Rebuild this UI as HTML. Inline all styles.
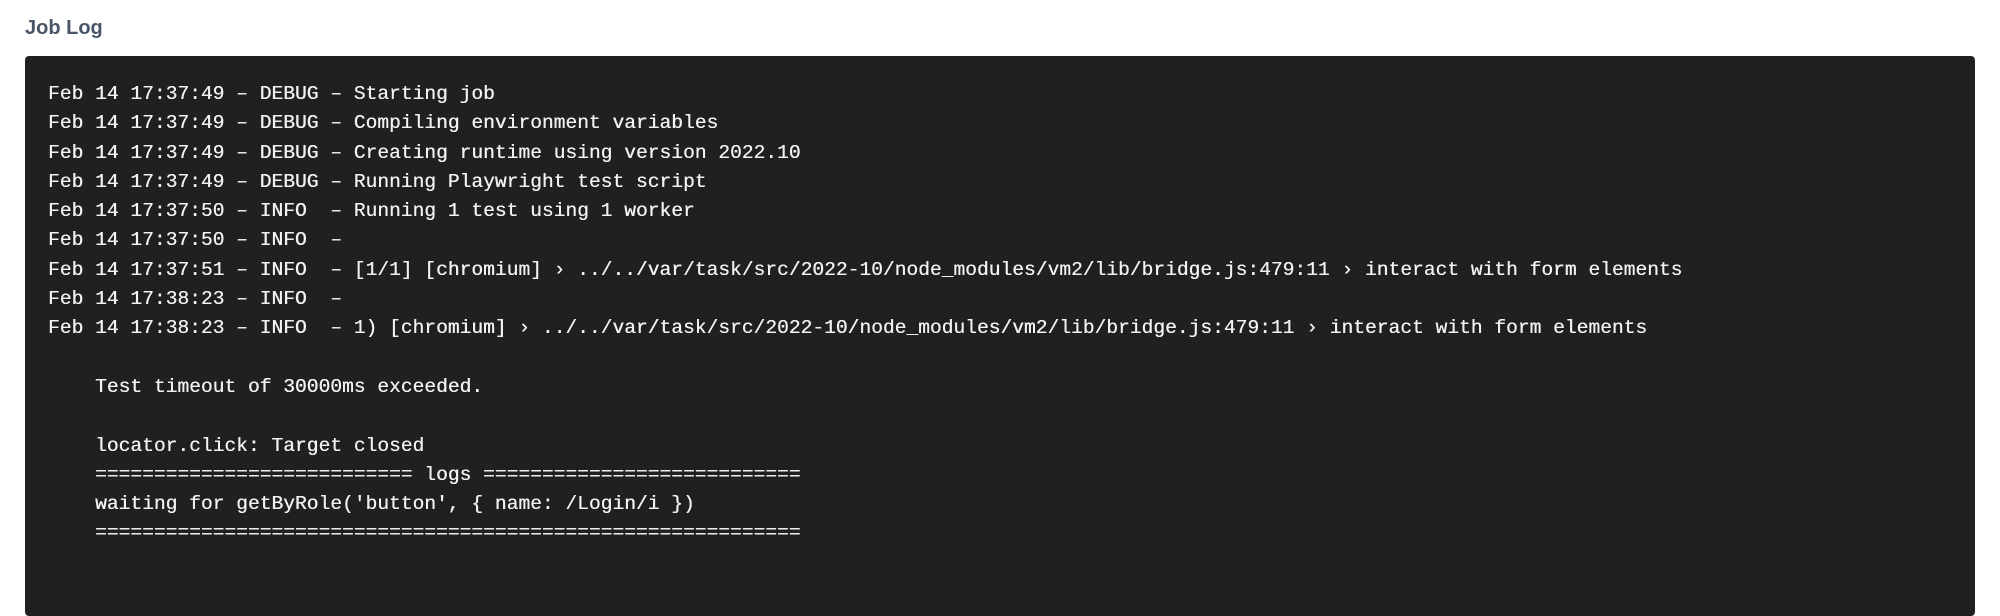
<!DOCTYPE html>
<html><head><meta charset="utf-8"><style>
html,body{margin:0;padding:0;background:#fff;width:2000px;height:565px;overflow:hidden}
.t{position:absolute;left:25px;top:17px;font-family:"Liberation Sans",sans-serif;font-size:20px;font-weight:600;color:#4a5568}
.box{position:absolute;left:25px;top:56px;width:1950px;height:560px;background:#202020;border-radius:4px}
pre{position:absolute;left:48px;top:80px;margin:0;font-family:"Liberation Mono",monospace;font-size:19.6px;line-height:29.3px;color:#f2f2f2;text-shadow:0.3px 0 0 #f2f2f2}
</style></head><body>
<div class="t">Job Log</div>
<div class="box"></div>
<pre>Feb 14 17:37:49 – DEBUG – Starting job
Feb 14 17:37:49 – DEBUG – Compiling environment variables
Feb 14 17:37:49 – DEBUG – Creating runtime using version 2022.10
Feb 14 17:37:49 – DEBUG – Running Playwright test script
Feb 14 17:37:50 – INFO  – Running 1 test using 1 worker
Feb 14 17:37:50 – INFO  –
Feb 14 17:37:51 – INFO  – [1/1] [chromium] › ../../var/task/src/2022-10/node_modules/vm2/lib/bridge.js:479:11 › interact with form elements
Feb 14 17:38:23 – INFO  –
Feb 14 17:38:23 – INFO  – 1) [chromium] › ../../var/task/src/2022-10/node_modules/vm2/lib/bridge.js:479:11 › interact with form elements

    Test timeout of 30000ms exceeded.

    locator.click: Target closed
    =========================== logs ===========================
    waiting for getByRole('button', { name: /Login/i })
    ============================================================</pre>
</body></html>
